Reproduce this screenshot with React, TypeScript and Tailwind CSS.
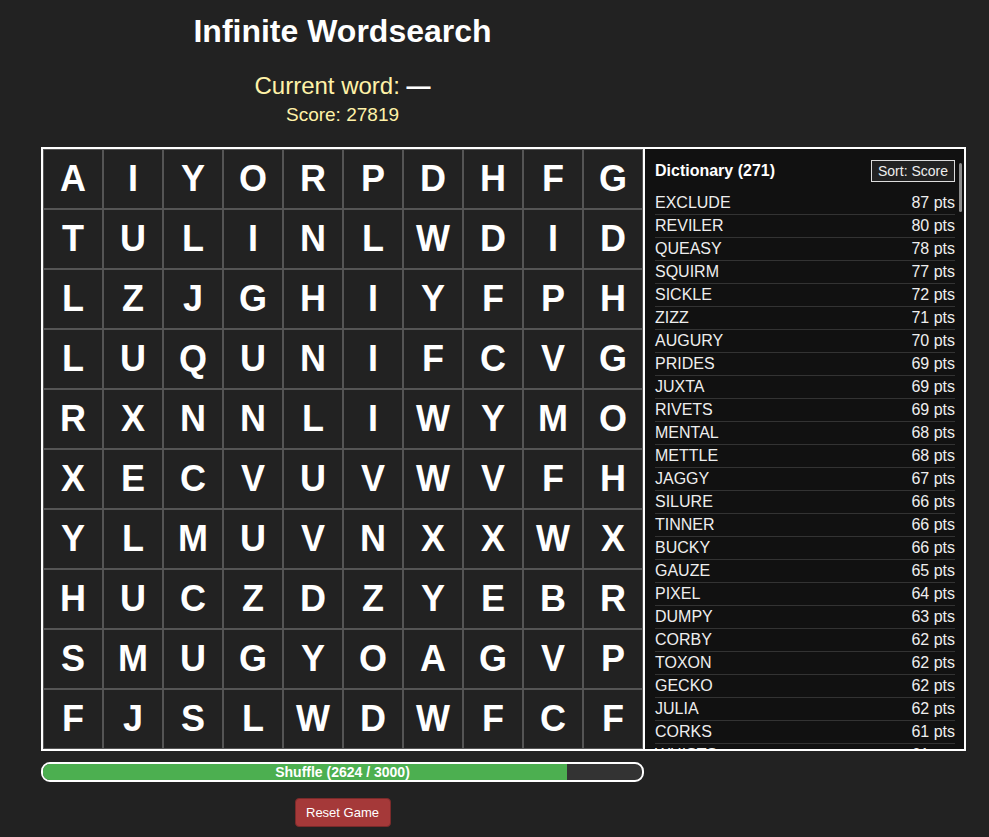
import React from "react";

const GRID = [
  "AIYORPDHFG",
  "TULINLWDID",
  "LZJGHIYFPH",
  "LUQUNIFCVG",
  "RXNNLIWYMO",
  "XECVUVWVFH",
  "YLMUVNXXWX",
  "HUCZDZYEBR",
  "SMUGYOAGVP",
  "FJSLWDWFCF",
];

const WORDS: [string, number][] = [
  ["EXCLUDE", 87],
  ["REVILER", 80],
  ["QUEASY", 78],
  ["SQUIRM", 77],
  ["SICKLE", 72],
  ["ZIZZ", 71],
  ["AUGURY", 70],
  ["PRIDES", 69],
  ["JUXTA", 69],
  ["RIVETS", 69],
  ["MENTAL", 68],
  ["METTLE", 68],
  ["JAGGY", 67],
  ["SILURE", 66],
  ["TINNER", 66],
  ["BUCKY", 66],
  ["GAUZE", 65],
  ["PIXEL", 64],
  ["DUMPY", 63],
  ["CORBY", 62],
  ["TOXON", 62],
  ["GECKO", 62],
  ["JULIA", 62],
  ["CORKS", 61],
  ["WHISTS", 61],
  ["BRUTE", 60],
];

export default function App() {
  const pct = (2624 / 3000) * 100;
  return (
    <div className="min-h-screen bg-[#222222] font-['Liberation_Sans',Arial,sans-serif] text-white">
      <div className="pl-[41px] pt-[12px]">
        <div className="w-[603px] flex flex-col items-center">
          <h1 className="text-[32px] leading-[38px] font-bold text-white">Infinite Wordsearch</h1>
          <div className="mt-[22px] text-[24px] leading-[28px] text-[#fff2a8]">
            Current word: <span className="text-white font-bold">—</span>
          </div>
          <div className="mt-[4px] text-[19px] leading-[22px] text-[#fff2a8]">Score: 27819</div>
        </div>

        <div className="mt-[21px] flex w-[925px] border-2 border-white">
          <div className="grid grid-cols-10 w-[600px] h-[600px]">
            {GRID.flatMap((row, r) =>
              row.split("").map((ch, c) => (
                <div
                  key={`${r}-${c}`}
                  className="w-[60px] h-[60px] border border-[#555555] bg-[#222222] flex items-center justify-center text-[36px] font-bold text-white"
                >
                  {ch}
                </div>
              ))
            )}
          </div>
          <div className="relative w-[321px] h-[600px] border-l-2 border-white bg-[#111111] overflow-hidden pl-[10px] pr-[9px] pt-[11px]">
            <div className="flex items-center justify-between h-[22px] mb-[10px]">
              <span className="text-[16px] font-bold text-white">Dictionary (271)</span>
              <span className="h-[22px] px-[6px] flex items-center border border-[#dddddd] bg-[#222222] text-[14px] text-[#eeeeee]">
                Sort: Score
              </span>
            </div>
            <div className="flex flex-col">
              {WORDS.map(([w, p]) => (
                <div
                  key={w}
                  className="h-[23px] flex items-center justify-between border-b border-[#333333] text-[16px] text-[#eeeeee]"
                >
                  <span>{w}</span>
                  <span>{p} pts</span>
                </div>
              ))}
            </div>
            <div className="absolute right-[2px] top-[14px] w-[3px] h-[49px] rounded-full bg-[#8a8a8a]" />
          </div>
        </div>

        <div className="mt-[11px] relative w-[603px] h-[20px] rounded-[9px] border-2 border-white bg-[#333333] overflow-hidden">
          <div className="h-full bg-[#4caf50]" style={{ width: `${pct}%` }} />
          <div className="absolute inset-0 flex items-center justify-center text-[14px] font-bold text-white leading-none">
            Shuffle (2624 / 3000)
          </div>
        </div>

        <div className="w-[603px] flex justify-center mt-[16px]">
          <button className="w-[96px] h-[29px] rounded-[4px] bg-[#a53939] border border-[#7a2a2a] text-[13px] text-white">
            Reset Game
          </button>
        </div>
      </div>
    </div>
  );
}
